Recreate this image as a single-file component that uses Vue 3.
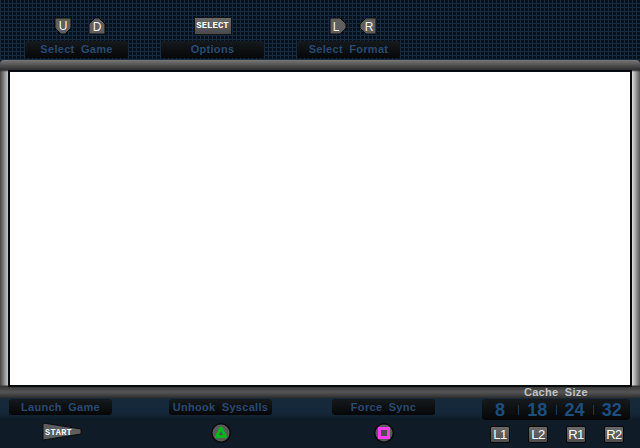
<script setup>
const cacheSizes = ['8', '18', '24', '32'];
const triggers = ['L1', 'L2', 'R1', 'R2'];
</script>

<template>
  <div class="screen">
    <header class="top">
      <div class="group">
        <div class="icons game-icons">
          <svg width="18" height="18" viewBox="0 0 18 18">
            <path class="key" d="M1 1H17V11L11 17H7L1 11Z" />
            <text x="9" y="13" class="key-text">U</text>
          </svg>
          <svg width="18" height="18" viewBox="0 0 18 18">
            <path class="key" d="M7 1H11L17 7V17H1V7Z" />
            <text x="9" y="14" class="key-text">D</text>
          </svg>
        </div>
        <div class="label">Select Game</div>
      </div>
      <div class="group">
        <div class="icons">
          <div class="select-key">SELECT</div>
        </div>
        <div class="label">Options</div>
      </div>
      <div class="group">
        <div class="icons format-icons">
          <svg width="18" height="18" viewBox="0 0 18 18">
            <path class="key" d="M1 1H11L17 7V11L11 17H1Z" />
            <text x="7" y="14" class="key-text">L</text>
          </svg>
          <svg width="18" height="18" viewBox="0 0 18 18">
            <path class="key" d="M7 1H17V17H7L1 11V7Z" />
            <text x="10" y="14" class="key-text">R</text>
          </svg>
        </div>
        <div class="label">Select Format</div>
      </div>
    </header>

    <main class="frame">
      <div class="panel"></div>
    </main>

    <footer class="bottom">
      <div class="action launch">
        <div class="label small">Launch Game</div>
        <svg class="start" width="40" height="19" viewBox="0 0 40 19">
          <path class="key" d="M1 1L39 7V12L1 18Z" />
          <text x="3" y="12.5" class="start-text">START</text>
        </svg>
      </div>
      <div class="action unhook">
        <div class="label small">Unhook Syscalls</div>
        <svg width="20" height="20" viewBox="0 0 20 20">
          <circle cx="10" cy="10" r="10" fill="#0a0a0a" />
          <circle cx="10" cy="10" r="8.5" fill="#5a5a5a" />
          <path d="M10 5L14.5 13.5H5.5Z" fill="#4d4d4d" stroke="#00b81c" stroke-width="3" stroke-linejoin="round" />
        </svg>
      </div>
      <div class="action force">
        <div class="label small">Force Sync</div>
        <svg width="20" height="20" viewBox="0 0 20 20">
          <circle cx="10" cy="10" r="10" fill="#0a0a0a" />
          <circle cx="10" cy="10" r="8.5" fill="#5a5a5a" />
          <rect x="5.5" y="5.5" width="9" height="9" fill="#4d4d4d" stroke="#ff3cf0" stroke-width="3" />
        </svg>
      </div>
      <div class="cache">
        <div class="cache-title">Cache Size</div>
        <div class="cache-box">
          <span v-for="size in cacheSizes" :key="size" class="cache-num">{{ size }}</span>
        </div>
        <div class="triggers">
          <span v-for="t in triggers" :key="t" class="trigger">{{ t }}</span>
        </div>
      </div>
    </footer>
  </div>
</template>

<style scoped>
.screen {
  width: 640px;
  height: 448px;
  overflow: hidden;
  display: flex;
  flex-direction: column;
  background: #0e1a24;
  font-family: "Liberation Sans", Arial, sans-serif;
}

.top {
  height: 60px;
  flex: none;
  box-sizing: border-box;
  padding: 0 0 2px 25px;
  display: flex;
  gap: 33px;
  align-items: flex-end;
  background-color: #08111b;
  background-image:
    repeating-linear-gradient(90deg, #172c41 0 1px, transparent 1px 4px),
    repeating-linear-gradient(0deg, #172c41 0 1px, transparent 1px 4px);
}

.group {
  width: 103px;
  display: flex;
  flex-direction: column;
  align-items: center;
  gap: 5px;
}

.icons {
  height: 20px;
  display: flex;
  align-items: center;
  justify-content: center;
}

.game-icons {
  gap: 16px;
  margin-left: 6px;
}

.format-icons {
  gap: 12px;
  margin-left: 8px;
}

.key {
  fill: #5e5e5e;
  stroke: #0b0b0b;
  stroke-width: 1;
}

.key-text {
  fill: #f2f2f2;
  font-size: 12px;
  text-anchor: middle;
  font-family: "Liberation Sans", sans-serif;
}

.start-text {
  fill: #fff;
  font-size: 8.5px;
  font-weight: bold;
  letter-spacing: 0.3px;
  font-family: "Liberation Mono", monospace;
}

.select-key {
  width: 38px;
  height: 18px;
  box-sizing: border-box;
  border: 1px solid #111;
  border-radius: 1px;
  background: linear-gradient(#6a6a6a, #4a4a4a);
  color: #fff;
  font-family: "Liberation Mono", monospace;
  font-size: 9px;
  font-weight: bold;
  line-height: 16px;
  text-align: center;
}

.label {
  width: 103px;
  height: 17px;
  border-radius: 3px;
  background: linear-gradient(#161a1d, #050607);
  color: #274a72;
  font-size: 11px;
  font-weight: bold;
  letter-spacing: 0.3px;
  word-spacing: 3px;
  line-height: 17px;
  text-align: center;
}

.small {
  height: 16px;
  line-height: 16px;
}

.frame {
  height: 338px;
  flex: none;
  box-sizing: border-box;
  padding: 10px 8px 11px 8px;
  border-radius: 4px 4px 0 0;
  background:
    linear-gradient(#777 0, #2c2c2c 10px, transparent 12px, transparent 325px, #333 326px, #555 332px, #2c2c2c 338px),
    linear-gradient(90deg, #444 0, #c8c8c8 8px, #3a3a3a 9px, #3a3a3a 631px, #e0e0e0 632px, #555 640px);
}

.panel {
  height: 100%;
  box-sizing: border-box;
  border: 2px solid #050a0f;
  background: #fff;
}

.bottom {
  flex: 1;
  display: flex;
  background: linear-gradient(#16293b 0, #14283a 14px, #0f1b26 22px);
}

.action {
  width: 103px;
  display: flex;
  flex-direction: column;
  align-items: center;
  margin-top: 1px;
}

.launch {
  margin-left: 9px;
}

.unhook {
  margin-left: 57px;
}

.force {
  margin-left: 60px;
}

.action svg {
  margin-top: 8px;
}

.action .start {
  margin-top: 7px;
  margin-right: -3px;
}

.cache {
  width: 148px;
  margin-left: 47px;
  margin-top: -12px;
  display: flex;
  flex-direction: column;
}

.cache-title {
  height: 13px;
  color: #c2c2c2;
  font-size: 11px;
  font-weight: bold;
  letter-spacing: 0.3px;
  word-spacing: 3px;
  line-height: 13px;
  text-align: center;
}

.cache-box {
  height: 21px;
  display: flex;
  align-items: center;
  border-radius: 3px;
  background: linear-gradient(#161a1d, #050607);
}

.cache-num {
  flex: 1;
  text-align: center;
  color: #1c4e80;
  font-size: 18px;
  font-weight: bold;
  border-left: 1px solid #1c3850;
  line-height: 10px;
}

.cache-num:first-child {
  border-left: none;
}

.triggers {
  margin-top: 6px;
  padding: 0 6px 0 8px;
  display: flex;
  justify-content: space-between;
}

.trigger {
  width: 20px;
  height: 17px;
  box-sizing: border-box;
  border: 1px solid #0a0a0a;
  border-radius: 2px;
  background: linear-gradient(#6a6a6a, #4e4e4e);
  color: #fff;
  font-size: 13px;
  letter-spacing: -0.5px;
  line-height: 15px;
  text-align: center;
}
</style>
